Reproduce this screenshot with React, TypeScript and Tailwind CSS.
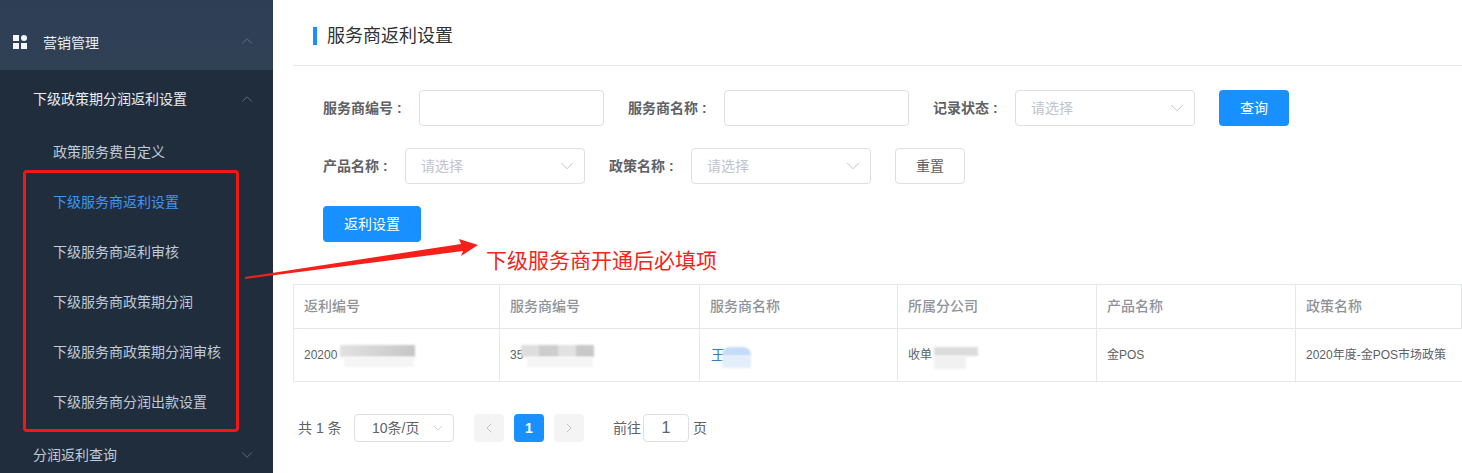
import React from 'react';
import { ChevronDown, ChevronLeft, ChevronRight, ChevronUp } from 'lucide-react';

const subMenu = [
  { label: '政策服务费自定义' },
  { label: '下级服务商返利设置', active: true },
  { label: '下级服务商返利审核' },
  { label: '下级服务商政策期分润' },
  { label: '下级服务商政策期分润审核' },
  { label: '下级服务商分润出款设置' },
];

const columns = ['返利编号', '服务商编号', '服务商名称', '所属分公司', '产品名称', '政策名称'];

const Select = ({ width }: { width: string }) => (
  <div className={`${width} h-9 flex items-center justify-between border border-[#dcdfe6] rounded pl-[15px] pr-[6px] bg-white`}>
    <span className="text-sm text-[#c0c4cc]">请选择</span>
    <ChevronDown size={22} strokeWidth={0.9} className="text-[#b4b8c0]" />
  </div>
);

const Sidebar = () => (
  <aside className="w-[273px] h-full shrink-0 bg-[#202d3d] flex flex-col text-sm">
    <div className="h-[70px] shrink-0 flex items-end bg-gradient-to-b from-[#2e3e55] to-[#304156]">
      <div className="h-[54px] w-full flex items-center justify-between pl-[13px] pr-[17px] text-[#e8edf3]">
        <div className="flex items-center">
          <svg width="14" height="14" viewBox="0 0 14 14" className="mr-4 -mt-[2px]" fill="#f5f7fa">
            <rect x="0" y="0" width="6" height="6" />
            <circle cx="11" cy="3" r="3" />
            <rect x="0" y="8" width="6" height="6" />
            <rect x="8" y="8" width="6" height="6" />
          </svg>
          <span>营销管理</span>
        </div>
        <ChevronUp size={18} strokeWidth={1.1} className="text-[#6b7888] -mt-1" />
      </div>
    </div>
    <div className="h-[57px] shrink-0 flex items-center justify-between pl-[33px] pr-[17px] text-[#e8edf3]">
      <span>下级政策期分润返利设置</span>
      <ChevronUp size={18} strokeWidth={1.1} className="text-[#6b7888]" />
    </div>
    {subMenu.map((item) => (
      <div
        key={item.label}
        className={`h-[50px] shrink-0 flex items-center pl-[53px] ${item.active ? 'text-[#3f96f5]' : 'text-[#bfcbd9]'}`}
      >
        {item.label}
      </div>
    ))}
    <div className="h-[56px] shrink-0 flex items-center justify-between pl-[33px] pr-[17px] text-[#bfcbd9]">
      <span>分润返利查询</span>
      <ChevronDown size={18} strokeWidth={1.1} className="text-[#6b7888]" />
    </div>
  </aside>
);

const Filters = () => (
  <div className="pl-[30px] pt-6 flex flex-col gap-[22px]">
    <div className="flex items-center gap-6">
      <div className="flex items-center">
        <span className="w-[96px] text-sm font-bold text-[#606266]">服务商编号 :</span>
        <div className="w-[185px] h-9 border border-[#dcdfe6] rounded bg-white" />
      </div>
      <div className="flex items-center">
        <span className="w-[96px] text-sm font-bold text-[#606266]">服务商名称 :</span>
        <div className="w-[185px] h-9 border border-[#dcdfe6] rounded bg-white" />
      </div>
      <div className="flex items-center">
        <span className="w-[82px] text-sm font-bold text-[#606266]">记录状态 :</span>
        <Select width="w-[180px]" />
      </div>
      <button className="w-[70px] h-9 rounded bg-[#1890ff] text-white text-sm">查询</button>
    </div>
    <div className="flex items-center gap-6">
      <div className="flex items-center">
        <span className="w-[82px] text-sm font-bold text-[#606266]">产品名称 :</span>
        <Select width="w-[180px]" />
      </div>
      <div className="flex items-center">
        <span className="w-[82px] text-sm font-bold text-[#606266]">政策名称 :</span>
        <Select width="w-[180px]" />
      </div>
      <button className="w-[70px] h-9 rounded border border-[#dcdfe6] bg-white text-[#606266] text-sm">重置</button>
    </div>
    <button className="w-[98px] h-9 rounded bg-[#1890ff] text-white text-sm">返利设置</button>
  </div>
);

const Table = () => (
  <div className="mt-[42px] border-t border-l border-[#e4e7ed] text-[#606266]">
    <div className="grid grid-cols-[206px_200px_198px_199px_199px_1fr] h-[44px]">
      {columns.map((c) => (
        <div key={c} className="flex items-center pl-[10px] pb-[2px] border-r border-b border-[#e4e7ed] text-sm font-medium text-[#909399]">
          {c}
        </div>
      ))}
    </div>
    <div className="grid grid-cols-[206px_200px_198px_199px_199px_1fr] h-[53px] text-xs">
      <div className="relative flex items-center pl-[10px] border-r border-b border-[#e4e7ed]">
        20200
        <div className="absolute left-[46px] top-[16px] w-[75px] h-[12px] bg-gradient-to-r from-[#e2e2e2] to-[#c6c6c6] blur-[1px]" />
        <div className="absolute left-[50px] top-[28px] w-[70px] h-[10px] bg-[#f5f5f5] blur-[1px]" />
      </div>
      <div className="relative flex items-center pl-[10px] border-r border-b border-[#e4e7ed]">
        35
        <div className="absolute left-[21px] top-[16px] w-[73px] h-[12px] flex blur-[1px]">
          <div className="flex-1 bg-[#dedede]" />
          <div className="flex-1 bg-[#cdcdcd]" />
          <div className="flex-1 bg-[#e2e2e2]" />
          <div className="flex-1 bg-[#c8c8c8]" />
        </div>
        <div className="absolute left-[27px] top-[28px] w-[66px] h-[10px] bg-[#f5f5f5] blur-[1px]" />
      </div>
      <div className="relative flex items-center pl-[11px] border-r border-b border-[#e4e7ed] text-sm text-[#2f80c8]">
        王
        <div className="absolute left-[22px] top-[18px] w-[29px] h-[9px] rounded-t-lg bg-[#c3dcf8] blur-[1px]" />
        <div className="absolute left-[22px] top-[27px] w-[29px] h-[12px] bg-[#e3eefb] blur-[1px]" />
      </div>
      <div className="relative flex items-center pl-[10px] border-r border-b border-[#e4e7ed]">
        收单
        <div className="absolute left-[36px] top-[18px] w-[44px] h-[9px] bg-[#dcdcdc] blur-[1px]" />
        <div className="absolute left-[36px] top-[27px] w-[32px] h-[13px] bg-[#f1f1f1] blur-[1px]" />
      </div>
      <div className="flex items-center pl-[10px] border-r border-b border-[#e4e7ed]">金POS</div>
      <div className="flex items-center pl-[10px] border-b border-[#e4e7ed] whitespace-nowrap">2020年度-金POS市场政策</div>
    </div>
  </div>
);

const Pagination = () => (
  <div className="mt-8 h-7 pl-[5px] flex items-center text-sm text-[#606266]">
    <span className="w-[56px]">共 1 条</span>
    <div className="w-[100px] h-7 flex items-center justify-between border border-[#dcdfe6] rounded pl-[17px] pr-[7px]">
      <span>10条/页</span>
      <ChevronDown size={16} strokeWidth={1.1} className="text-[#c0c4cc]" />
    </div>
    <div className="ml-5 w-[30px] h-7 flex items-center justify-center bg-[#f4f4f5] text-[#c0c4cc] rounded-sm">
      <ChevronLeft size={16} strokeWidth={1.5} />
    </div>
    <div className="ml-[10px] w-[30px] h-7 flex items-center justify-center bg-[#1890ff] text-white font-bold rounded-sm">1</div>
    <div className="ml-[10px] w-[30px] h-7 flex items-center justify-center bg-[#f4f4f5] text-[#c0c4cc] rounded-sm">
      <ChevronRight size={16} strokeWidth={1.5} />
    </div>
    <span className="ml-[29px]">前往</span>
    <div className="ml-[2px] w-[46px] h-7 flex items-center justify-center border border-[#dcdfe6] rounded text-base">1</div>
    <span className="ml-1">页</span>
  </div>
);

export default function App() {
  return (
    <div
      className="relative w-[1462px] h-[473px] overflow-hidden flex bg-white"
      style={{ fontFamily: '"Liberation Sans", "Noto Sans CJK SC", sans-serif' }}
    >
      <Sidebar />
      <main className="flex-1 min-w-0 pl-5">
        <div className="h-[66px] border-b border-[#e8eaed] flex items-center pl-5 pt-[6px]">
          <span className="w-1 h-[18px] bg-[#1890ff] mr-[9px]" />
          <h1 className="text-lg text-[#303133] ml-px">服务商返利设置</h1>
        </div>
        <Filters />
        <Table />
        <Pagination />
      </main>

      {/* red annotation drawn over the screenshot */}
      <div className="absolute left-[23px] top-[170px] w-[216px] h-[262px] border-[3px] border-[#f5170f] rounded" />
      <svg className="absolute left-0 top-0 pointer-events-none" width="1462" height="473">
        <polygon points="245,277 245,279 463,251 461,256 478,245 459,239 461,244" fill="#f5201a" />
      </svg>
      <span className="absolute left-[486px] top-[245px] text-[21px] leading-[32px] text-[#f0261c] whitespace-nowrap">
        下级服务商开通后必填项
      </span>
    </div>
  );
}
